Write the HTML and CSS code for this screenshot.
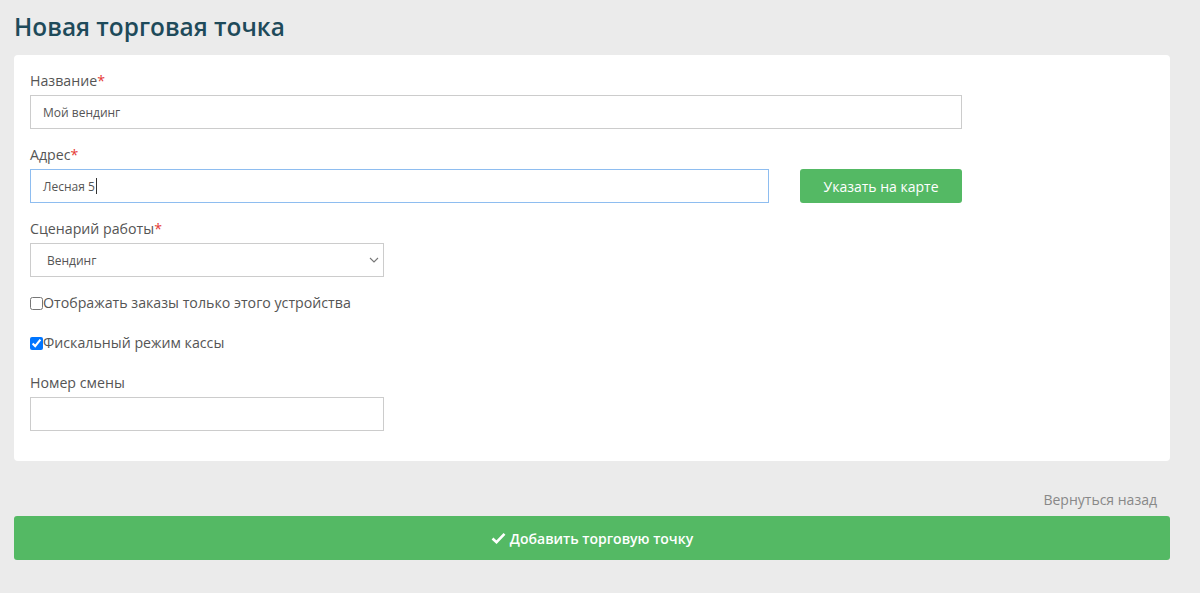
FILE: index.html
```html
<!DOCTYPE html>
<html lang="ru">
<head>
<meta charset="utf-8">
<link rel="stylesheet" href="styles.css">
</head>
<body>
<div class="page">
  <h1 class="title">Новая торговая точка</h1>
  <div class="card">
    <div class="field">
      <label class="label">Название<span class="req">*</span></label>
      <input class="input input-wide" type="text" value="Мой вендинг">
    </div>
    <div class="field">
      <label class="label">Адрес<span class="req">*</span></label>
      <div class="row">
        <div class="input input-addr focused"><span>Лесная 5</span><span class="caret"></span></div>
        <button class="btn-map" type="button">Указать на карте</button>
      </div>
    </div>
    <div class="field">
      <label class="label">Сценарий работы<span class="req">*</span></label>
      <div class="select">
        <span>Вендинг</span>
        <svg class="chev" width="10" height="6" viewBox="0 0 10 6"><path d="M1 1 L5 5 L9 1" fill="none" stroke="#777" stroke-width="1.1"/></svg>
      </div>
    </div>
    <label class="check"><input type="checkbox">Отображать заказы только этого устройства</label>
    <label class="check"><input type="checkbox" checked>Фискальный режим кассы</label>
    <div class="field field-last">
      <label class="label">Номер смены</label>
      <input class="input input-short" type="text">
    </div>
  </div>
  <div class="back-row"><a class="back">Вернуться назад</a></div>
  <button class="btn-submit" type="button">
    <svg width="15" height="12" viewBox="0 0 15 12"><path d="M1.5 6.5 L5.5 10.2 L13.5 1.8" fill="none" stroke="#fff" stroke-width="2.6"/></svg>
    Добавить торговую точку
  </button>
</div>
</body>
</html>
```
FILE: styles.css
```css
* { box-sizing: border-box; }
html, body { margin: 0; padding: 0; }
body {
  background: #ebebeb;
  font-family: "Open Sans", "Noto Sans", sans-serif;
  color: #555;
}
.page {
  padding: 0 30px 0 14px;
}
.title {
  margin: 0;
  padding-top: 10px;
  height: 55px;
  font-size: 24.4px;
  font-weight: 600;
  color: #1e4a5a;
  line-height: 34px;
}
.card {
  background: #fff;
  border-radius: 4px;
  padding: 16px 16px 30px 16px;
  width: 1156px;
}
.field {
  display: flex;
  flex-direction: column;
  margin-bottom: 16px;
}
.field-last { margin-bottom: 0; }
.label {
  font-size: 14.2px;
  line-height: 20px;
  color: #555;
  margin-bottom: 4px;
}
.req { color: #e53935; }
.input {
  height: 34px;
  border: 1px solid #ccc;
  font-family: "Open Sans", sans-serif;
  font-size: 12px;
  color: #555;
  padding: 0 12px;
  outline: none;
  background: #fff;
}
div.input {
  display: flex;
  align-items: center;
}
.caret {
  display: inline-block;
  width: 1px;
  height: 16px;
  background: #333;
  margin-left: 1px;
}
.input-wide { width: 932px; }
.input-addr { width: 739px; }
.input-short { width: 354px; }
.focused { border-color: #8ebdf0; }
.row {
  display: flex;
  gap: 31px;
  align-items: center;
}
.btn-map {
  width: 162px;
  height: 34px;
  background: #54b964;
  border: none;
  border-radius: 3px;
  color: #fff;
  font-family: "Open Sans", sans-serif;
  font-size: 14px;
}
.select {
  width: 354px;
  height: 34px;
  border: 1px solid #ccc;
  display: flex;
  align-items: center;
  justify-content: space-between;
  padding: 0 4px 0 16px;
  font-size: 12px;
  color: #555;
}
.check {
  display: flex;
  align-items: center;
  font-size: 14.2px;
  line-height: 20px;
  color: #555;
  margin-bottom: 20px;
}
.check input {
  margin: 0;
  width: 13px;
  height: 13px;
}
.back-row {
  display: flex;
  justify-content: flex-end;
  padding: 29px 13px 6px 0;
}
.back {
  font-size: 14px;
  line-height: 20px;
  color: #888;
}
.btn-submit {
  width: 1156px;
  height: 44px;
  background: #54b964;
  border: none;
  border-radius: 3px;
  color: #fff;
  font-family: "Open Sans", sans-serif;
  font-size: 14px;
  font-weight: 600;
  display: flex;
  align-items: center;
  justify-content: center;
  gap: 4px;
}
```
